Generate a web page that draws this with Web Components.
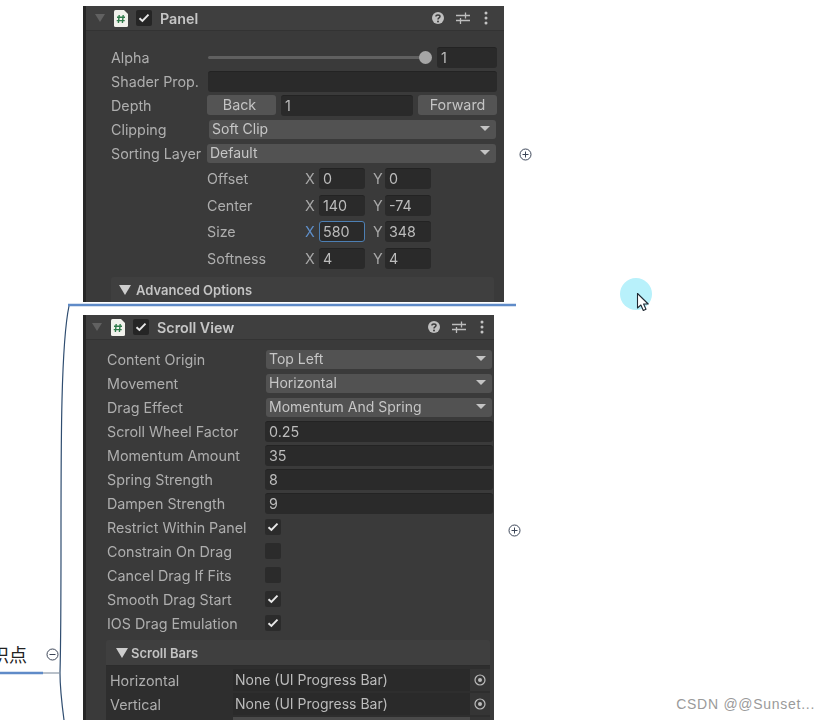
<!DOCTYPE html>
<html>
<head>
<meta charset="utf-8">
<style>
  html, body { margin: 0; background: #fff; overflow: hidden; }
</style>
</head>
<body>
<mind-canvas>
  <inspector-panel title="Panel" style="left:83px;top:6px;width:421px;height:296px;--pad:25px;--pad-r:7px;--label:97px;--head-l:9px;--head-r:16px;--body-top:15px">
    <ui-row label="Alpha"><ui-slider value="1"></ui-slider></ui-row>
    <ui-row label="Shader Prop."><ui-input></ui-input></ui-row>
    <ui-row label="Depth" style="--shift:-1px">
      <ui-button style="width:69px;padding-right:4px;box-sizing:border-box">Back</ui-button>
      <ui-input style="flex:1;margin:0 5px">1</ui-input>
      <ui-button style="width:79px">Forward</ui-button>
    </ui-row>
    <ui-row label="Clipping" style="--shift:1px"><ui-dropdown>Soft Clip</ui-dropdown></ui-row>
    <ui-row label="Sorting Layer" style="--shift:-1px"><ui-dropdown>Default</ui-dropdown></ui-row>
    <vec-row label="Offset" x="0" y="0" style="margin-top:2px"></vec-row>
    <vec-row label="Center" x="140" y="-74"></vec-row>
    <vec-row label="Size" x="580" y="348" focus></vec-row>
    <vec-row label="Softness" x="4" y="4"></vec-row>
    <ui-section title="Advanced Options" style="margin:3px 3px 0 0"></ui-section>
  </inspector-panel>

  <inspector-panel title="Scroll View" style="left:83px;top:315px;width:411px;height:405px;--pad:21px;--pad-r:1px;--label:158px;--head-l:6px;--head-r:10px;--body-top:8px">
    <ui-row label="Content Origin" style="--shift:1px"><ui-dropdown>Top Left</ui-dropdown></ui-row>
    <ui-row label="Movement" style="--shift:1px"><ui-dropdown>Horizontal</ui-dropdown></ui-row>
    <ui-row label="Drag Effect" style="--shift:1px"><ui-dropdown>Momentum And Spring</ui-dropdown></ui-row>
    <ui-row label="Scroll Wheel Factor"><ui-input>0.25</ui-input></ui-row>
    <ui-row label="Momentum Amount"><ui-input>35</ui-input></ui-row>
    <ui-row label="Spring Strength"><ui-input>8</ui-input></ui-row>
    <ui-row label="Dampen Strength"><ui-input>9</ui-input></ui-row>
    <ui-row label="Restrict Within Panel"><ui-check checked></ui-check></ui-row>
    <ui-row label="Constrain On Drag"><ui-check></ui-check></ui-row>
    <ui-row label="Cancel Drag If Fits"><ui-check></ui-check></ui-row>
    <ui-row label="Smooth Drag Start"><ui-check checked></ui-check></ui-row>
    <ui-row label="IOS Drag Emulation"><ui-check checked></ui-check></ui-row>
    <ui-section title="Scroll Bars" style="margin:4px 3px 0 -1px;--sec-pad:10px;--sec-gap:3px">
      <object-row label="Horizontal">None (UI Progress Bar)</object-row>
      <object-row label="Vertical">None (UI Progress Bar)</object-row>
      <object-row blank></object-row>
    </ui-section>
  </inspector-panel>
</mind-canvas>

<script>
const CHECK = '<svg width="12" height="10" viewBox="0 0 12 10"><path d="M1.5 5.2 4.4 8 10.5 1.6" fill="none" stroke="#e8e8e8" stroke-width="1.9"/></svg>';

class MindCanvas extends HTMLElement {
  constructor() {
    super();
    this.attachShadow({ mode: 'open' }).innerHTML = `
      <style>
        :host { display: block; position: relative; width: 829px; height: 720px; overflow: hidden; background: #fff; }
        svg { position: absolute; left: 0; top: 0; }
        .text { position: absolute; left: -27px; top: 642px; font: 18px "Noto Sans CJK SC", sans-serif; line-height: 24px; color: #222; }
        .mark { position: absolute; right: 14px; top: 695px; font: 14px "Liberation Sans", sans-serif; letter-spacing: .72px; line-height: 18px; color: #9a9a9a; }
      </style>
      <svg width="829" height="720" viewBox="0 0 829 720">
        <circle cx="636" cy="294" r="16" fill="#b8f1fb"/>
        <path d="M60 673C62 600 60 480 62 400C63 360 65 325 69 306" fill="none" stroke="#2f4d70" stroke-width="1.2"/>
        <path d="M60 673C60 690 62 705 64 720" fill="none" stroke="#2f4d70" stroke-width="1.2"/>
        <path d="M68 305H516" stroke="#5f8bc8" stroke-width="2.6"/>
        <path d="M0 673H43" stroke="#5f8bc8" stroke-width="2.6"/>
        <path d="M43 673H60" stroke="#8a97a6" stroke-width="1.2"/>
        <g fill="#fff" stroke="#3c4658" stroke-width="1">
          <circle cx="525.5" cy="154.5" r="5.5"/><circle cx="514.5" cy="530.5" r="5.5"/><circle cx="52.5" cy="654.5" r="5.5"/>
        </g>
        <path d="M522.5 154.5h6M525.5 151.5v6M511.5 530.5h6M514.5 527.5v6M49.5 654.5h6" stroke="#3c4658" stroke-width="1"/>
      </svg>
      <slot></slot>
      <span class="text">知识点</span>
      <span class="mark">CSDN @@Sunset...</span>
      <svg width="829" height="720" viewBox="0 0 829 720" style="pointer-events:none">
        <path d="M637.5 293.5v14.5l3.4-3 2.4 5.5 2.7-1.2-2.4-5.3h4.6z" fill="#fff" stroke="#1f2933" stroke-width="1.1" stroke-linejoin="round"/>
      </svg>`;
  }
}

const panelTemplate = document.createElement('template');
panelTemplate.innerHTML = `
  <style>
    :host { display: block; position: absolute; overflow: hidden; background: #3a3a3a; color: #aeaeae;
      font: 14.3px Inter, "Liberation Sans", sans-serif; filter: blur(.5px); box-sizing: border-box; border-left: 3px solid #262626; }
    .head { display: flex; align-items: center; height: 25px; box-sizing: border-box; padding: 0 var(--head-r) 0 var(--head-l);
      background: #3f3f3f; border-bottom: 1px solid #333; }
    .tri { width: 0; height: 0; border: 5px solid transparent; border-top: 8px solid #616161; border-bottom: 0; margin-right: 9px; }
    .doc { margin-right: 8px; display: block; }
    .box { width: 16px; height: 16px; border-radius: 2px; background: #252525; display: flex; align-items: center; justify-content: center; margin-right: 8px; }
    .title { font-weight: 600; color: #c6c6c6; flex: 1; }
    .tools { display: flex; align-items: center; gap: 11px; }
    .kebab { margin-left: 3px; }
    .body { padding: var(--body-top) var(--pad-r) 0 var(--pad); display: flex; flex-direction: column; gap: 2px; }
  </style>
  <div class="head">
    <span class="tri"></span>
    <svg class="doc" width="14" height="17" viewBox="0 0 14 17">
      <path d="M0 1.5Q0 0 1.5 0H10L14 4V15.5Q14 17 12.5 17H1.5Q0 17 0 15.5Z" fill="#f1f1ec"/>
      <path d="M5.2 5 4.4 13M9.2 5 8.4 13M3 7.3h8M2.7 10.6h8" stroke="#2f7a4a" stroke-width="1.4" fill="none"/>
    </svg>
    <span class="box">${CHECK}</span>
    <span class="title"></span>
    <span class="tools">
      <svg width="14" height="14" viewBox="0 0 14 14"><circle cx="7" cy="7" r="6" fill="#c0c0c0"/><path d="M4.9 5.5C5 3.4 9 3.4 9 5.5 9 7 7 6.9 7 8.5" fill="none" stroke="#3c3c3c" stroke-width="1.5"/><circle cx="7" cy="10.4" r="1" fill="#3c3c3c"/></svg>
      <svg width="14" height="14" viewBox="0 0 14 14"><path d="M0 4.5h14M0 9.5h14M9.5 1.5v6M4.5 7v6" stroke="#bdbdbd" stroke-width="1.3" fill="none"/></svg>
      <svg class="kebab" width="4" height="14" viewBox="0 0 4 14"><g fill="#c4c4c4"><circle cx="2" cy="2" r="1.5"/><circle cx="2" cy="7" r="1.5"/><circle cx="2" cy="12" r="1.5"/></g></svg>
    </span>
  </div>
  <div class="body"><slot></slot></div>`;

class InspectorPanel extends HTMLElement {
  constructor() {
    super();
    this.attachShadow({ mode: 'open' }).appendChild(panelTemplate.content.cloneNode(true));
  }
  connectedCallback() {
    this.shadowRoot.querySelector('.title').textContent = this.getAttribute('title') || '';
  }
}

class UiRow extends HTMLElement {
  constructor() {
    super();
    this.attachShadow({ mode: 'open' }).innerHTML = `
      <style>
        :host { display: flex; align-items: center; height: 22px; }
        .label { width: var(--label); flex: none; white-space: nowrap; }
        .ctl { flex: 1; min-width: 0; display: flex; align-items: center; margin-left: var(--shift, 0); }
      </style>
      <span class="label"></span><div class="ctl"><slot></slot></div>`;
  }
  connectedCallback() {
    this.shadowRoot.querySelector('.label').textContent = this.getAttribute('label') || '';
  }
}

class UiInput extends HTMLElement {
  constructor() {
    super();
    this.attachShadow({ mode: 'open' }).innerHTML = `
      <style>
        :host { display: block; flex: 1; min-width: 0; height: 21px; box-sizing: border-box; padding: 0 4px; line-height: 20px;
          background: #2a2a2a; border-radius: 3px; color: #bcbcbc; white-space: nowrap; overflow: hidden; border-top: 1px solid #232323; }
      </style><slot></slot>`;
  }
}

class UiButton extends HTMLElement {
  constructor() {
    super();
    this.attachShadow({ mode: 'open' }).innerHTML = `
      <style>
        :host { display: block; flex: none; height: 20px; line-height: 20px; text-align: center; background: #545454; border-radius: 3px; color: #c4c4c4; }
      </style><slot></slot>`;
  }
}

class UiDropdown extends HTMLElement {
  constructor() {
    super();
    this.attachShadow({ mode: 'open' }).innerHTML = `
      <style>
        :host { display: flex; align-items: center; justify-content: space-between; flex: 1; min-width: 0; height: 19px; box-sizing: border-box;
          margin-right: 1px; padding: 0 6px 2px 3px; background: #525252; border-radius: 3px; color: #c6c6c6; font-size: 14px; }
        i { width: 0; height: 0; border: 5px solid transparent; border-top: 5px solid #c4c4c4; border-bottom: 0; }
      </style><span><slot></slot></span><i></i>`;
  }
}

class UiCheck extends HTMLElement {
  constructor() {
    super();
    this.attachShadow({ mode: 'open' }).innerHTML = `
      <style>
        :host { display: flex; align-items: center; justify-content: center; width: 16px; height: 16px; border-radius: 2px; background: #2b2b2b; }
      </style>${this.hasAttribute('checked') ? CHECK : ''}`;
  }
}

class UiSlider extends HTMLElement {
  constructor() {
    super();
    this.attachShadow({ mode: 'open' }).innerHTML = `
      <style>
        :host { display: flex; align-items: center; flex: 1; }
        .track { flex: 1; height: 3px; background: #606060; border-radius: 2px; position: relative; margin-right: 12px; }
        .thumb { position: absolute; right: -7px; top: -5px; width: 13px; height: 13px; border-radius: 50%; background: #a6a6a6; }
        ui-input { flex: none; width: 60px; }
      </style>
      <div class="track"><div class="thumb"></div></div>
      <ui-input>${this.getAttribute('value') || ''}</ui-input>`;
  }
}

class VecRow extends HTMLElement {
  constructor() {
    super();
    const focus = this.hasAttribute('focus');
    this.attachShadow({ mode: 'open' }).innerHTML = `
      <style>
        :host { display: flex; align-items: center; height: 21.5px; margin-bottom: 3px; padding-left: 96px; }
        .label { width: 98px; }
        .axis { width: 14px; color: #a8a8a8; }
        .axis.on { color: #5f8fc9; }
        .y { margin-left: 8px; width: 12px; }
        ui-input { flex: none; width: 46px; }
        ui-input.on { border: 1px solid #4d7fb3; line-height: 19px; padding: 0 3px; }
      </style>
      <span class="label">${this.getAttribute('label')}</span>
      <span class="axis ${focus ? 'on' : ''}">X</span><ui-input class="${focus ? 'on' : ''}">${this.getAttribute('x')}</ui-input>
      <span class="axis y">Y</span><ui-input>${this.getAttribute('y')}</ui-input>`;
  }
}

class UiSection extends HTMLElement {
  constructor() {
    super();
    this.attachShadow({ mode: 'open' }).innerHTML = `
      <style>
        :host { display: block; }
        .head { display: flex; align-items: center; height: 26px; box-sizing: border-box; padding-left: var(--sec-pad, 8px); background: #3f3f3f;
          border-radius: 3px 3px 0 0; font-size: 13px; font-weight: 600; color: #c4c4c4; border-bottom: 1px solid #2c2c2c; }
        i { width: 0; height: 0; border: 6.5px solid transparent; border-top: 10px solid #cdcdcd; border-bottom: 0; margin-right: var(--sec-gap, 5px); }
        .content { background: #2e2e2e; padding-top: 2px; }
      </style>
      <div class="head"><i></i><span class="t"></span></div>
      <div class="content"><slot></slot></div>`;
  }
  connectedCallback() {
    this.shadowRoot.querySelector('.t').textContent = this.getAttribute('title') || '';
  }
}

class ObjectRow extends HTMLElement {
  constructor() {
    super();
    const blank = this.hasAttribute('blank');
    this.attachShadow({ mode: 'open' }).innerHTML = `
      <style>
        :host { display: flex; align-items: center; height: 24px; padding-left: 4px; }
        .label { width: 123px; }
        .field { width: 237px; height: 22px; line-height: 22px; padding-left: 2px; box-sizing: border-box; background: ${blank ? '#4a4a4a' : '#2a2a2a'}; color: #bcbcbc; font-size: 14px; }
        .pick { width: 20px; height: 22px; display: flex; align-items: center; justify-content: center; background: #353535; }
      </style>
      <span class="label">${this.getAttribute('label') || ''}</span>
      <span class="field"><slot></slot></span>
      <span class="pick">${blank ? '' : '<svg width="12" height="12" viewBox="0 0 12 12"><circle cx="6" cy="6" r="5" fill="none" stroke="#bcbcbc" stroke-width="1.2"/><circle cx="6" cy="6" r="2" fill="#bcbcbc"/></svg>'}</span>`;
  }
}

customElements.define('ui-input', UiInput);
customElements.define('ui-button', UiButton);
customElements.define('ui-dropdown', UiDropdown);
customElements.define('ui-check', UiCheck);
customElements.define('ui-slider', UiSlider);
customElements.define('ui-row', UiRow);
customElements.define('vec-row', VecRow);
customElements.define('ui-section', UiSection);
customElements.define('object-row', ObjectRow);
customElements.define('inspector-panel', InspectorPanel);
customElements.define('mind-canvas', MindCanvas);
</script>
</body>
</html>
